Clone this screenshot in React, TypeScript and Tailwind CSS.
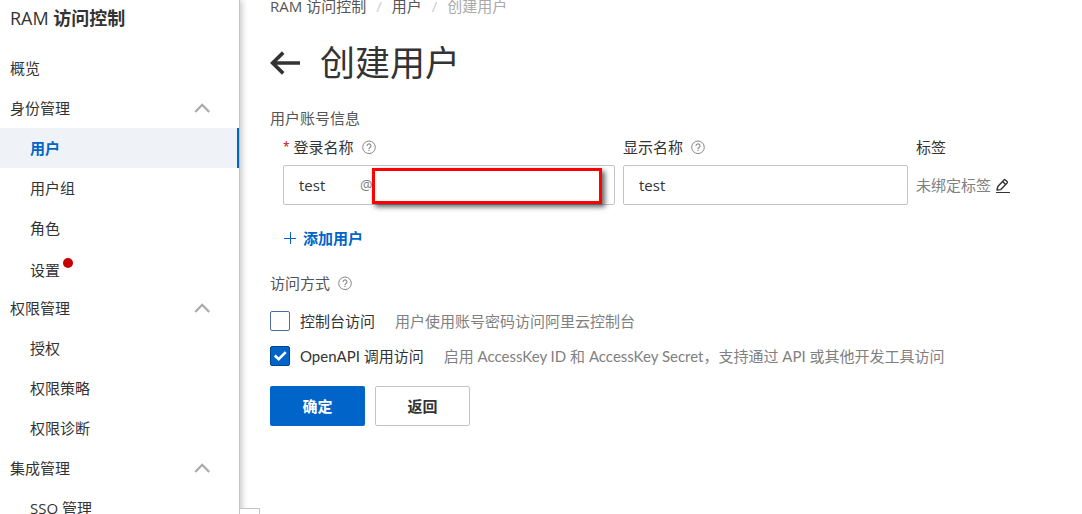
import { useState } from 'react';

interface NavItem {
  label: string;
  active?: boolean;
  dot?: boolean;
}

interface NavGroup {
  title: string;
  items: NavItem[];
}

const groups: NavGroup[] = [
  {
    title: '身份管理',
    items: [
      { label: '用户', active: true },
      { label: '用户组' },
      { label: '角色' },
      { label: '设置', dot: true },
    ],
  },
  {
    title: '权限管理',
    items: [{ label: '授权' }, { label: '权限策略' }, { label: '权限诊断' }],
  },
  {
    title: '集成管理',
    items: [{ label: 'SSO 管理' }],
  },
];

function ChevronUp() {
  return (
    <svg className="h-4 w-4 text-[#aaaaaa]" viewBox="0 0 16 16" fill="none" stroke="currentColor" strokeWidth="2.2">
      <path d="M1.2 12 8.2 4.8 15.2 12" />
    </svg>
  );
}

function HelpIcon() {
  return (
    <svg className="h-[14px] w-[14px] text-[#888888]" viewBox="0 0 14 14" fill="none" stroke="currentColor">
      <circle cx="7" cy="7.3" r="6.3" />
      <path d="M5 6a2 2 0 1 1 3 1.6c-.7.4-1 .7-1 1.3" strokeWidth="1.1" />
      <path d="M7 9.8v1.2" strokeWidth="1.2" />
    </svg>
  );
}

function PencilIcon() {
  return (
    <svg className="h-4 w-4 text-[#333333]" viewBox="0 0 16 16" fill="none" stroke="currentColor" strokeWidth="1.4">
      <path d="M2 13 2.8 9.6 9 2.9Q9.7 2.2 10.4 2.9L12.1 4.5Q12.7 5.2 12.1 5.9L5.8 12.6 2 13Z" strokeLinejoin="round" />
      <path d="M7.6 4.6 10.6 7.5" />
      <path d="M1 15.5h14" strokeWidth="1" />
    </svg>
  );
}

function Sidebar() {
  return (
    <aside className="relative z-10 w-60 shrink-0 border-r border-[#c0c4cc] bg-white shadow-[2px_0_6px_rgba(0,0,0,0.22)]">
      <h2 className="h-12 pt-2 pl-[10px] text-lg leading-5 font-semibold">
        <span className="font-normal">RAM</span> 访问控制
      </h2>
      <nav>
        <a href="#overview" className="flex h-10 items-center pl-[10px]">
          概览
        </a>
        {groups.map((group) => (
          <div key={group.title}>
            <button type="button" className="flex h-10 w-full items-center justify-between pr-[29px] pl-[10px]">
              {group.title}
              <ChevronUp />
            </button>
            {group.items.map((item) => (
              <a
                key={item.label}
                href="#"
                className={`flex h-10 items-center pl-[30px] ${
                  item.active ? 'border-r-2 border-[#0064c8] bg-[#eff3f8] font-semibold text-[#0064c8]' : ''
                }`}
              >
                {item.dot ? (
                  <span className="flex gap-[3px]">
                    <span className="pt-1">{item.label}</span>
                    <span className="mt-0.5 h-[10px] w-[10px] rounded-full bg-[#c80000]" />
                  </span>
                ) : (
                  item.label
                )}
              </a>
            ))}
          </div>
        ))}
      </nav>
      <button
        type="button"
        aria-label="收起"
        className="absolute top-[508px] left-full h-10 w-[21px] border border-[#c0c4cc] bg-white"
      />
    </aside>
  );
}

export default function App() {
  const [loginName, setLoginName] = useState('test');
  const [displayName, setDisplayName] = useState('test');
  const [consoleAccess, setConsoleAccess] = useState(false);
  const [apiAccess, setApiAccess] = useState(true);

  const checkboxClass =
    'h-5 w-5 shrink-0 appearance-none rounded-[2px] border border-[#4b6f9c] bg-white checked:border-[#00468c] checked:bg-[#0064c8]';

  return (
    <div className="flex h-screen overflow-hidden bg-white font-['Open_Sans','Noto_Sans_CJK_SC',sans-serif] text-[15px] leading-5 text-[#333333]">
      <Sidebar />
      <main className="min-w-0 flex-1 px-[30px]">
        <nav className="flex gap-[10px] leading-3 text-[#555555]">
          <a href="#ram">RAM 访问控制</a>
          <span className="text-[#cccccc]">/</span>
          <a href="#users">用户</a>
          <span className="text-[#cccccc]">/</span>
          <span className="text-[#aaaaaa]">创建用户</span>
        </nav>

        <div className="mt-[26px] flex items-center gap-5">
          <button type="button" aria-label="返回用户列表">
            <svg className="h-[30px] w-[30px]" viewBox="0 0 30 30" fill="none" stroke="currentColor" strokeWidth="3.6">
              <path d="M3 15h27M13.2 4.6 2.6 15l10.6 10.4" />
            </svg>
          </button>
          <h1 className="text-[35px] leading-[50px]">创建用户</h1>
        </div>

        <form onSubmit={(e) => e.preventDefault()}>
          <h3 className="mt-5 text-[#555555]">用户账号信息</h3>
          <div className="mt-[9px] grid grid-cols-[332fr_285fr_136fr] gap-2 pl-[13px]">
            <div>
              <div className="mb-2 flex items-center gap-2">
                <label htmlFor="loginName" className="flex gap-1">
                  <span className="text-xs leading-5 text-[#c80000]">*</span>
                  登录名称
                </label>
                <HelpIcon />
              </div>
              <div className="relative flex h-10 items-center rounded-[2px] border border-[#c0c4cc]">
                <input
                  id="loginName"
                  value={loginName}
                  onChange={(e) => setLoginName(e.target.value)}
                  className="h-full w-[76px] pl-[15px] outline-none"
                />
                <span className="text-sm text-[#808080]">@</span>
                <div className="absolute top-[2px] right-[12px] left-[88px] h-9 border-[3px] border-[#ff0000] bg-white shadow-[3px_3px_5px_rgba(0,0,0,0.6)]" />
              </div>
            </div>

            <div>
              <div className="mb-2 flex items-center gap-2">
                <label htmlFor="displayName">显示名称</label>
                <HelpIcon />
              </div>
              <input
                id="displayName"
                value={displayName}
                onChange={(e) => setDisplayName(e.target.value)}
                className="h-10 w-full rounded-[2px] border border-[#c0c4cc] px-[15px] outline-none"
              />
            </div>

            <div>
              <div className="mb-2">标签</div>
              <div className="flex h-10 items-center gap-1 whitespace-nowrap text-[#808080]">
                未绑定标签
                <button type="button" aria-label="编辑标签">
                  <PencilIcon />
                </button>
              </div>
            </div>
          </div>

          <button type="button" className="mt-[23px] ml-[14px] flex items-center gap-[7px] font-semibold text-[#0064c8]">
            <svg className="h-3 w-3" viewBox="0 0 12 12" fill="none" stroke="currentColor">
              <path d="M6.5 0v12M0 6.5h12" />
            </svg>
            添加用户
          </button>

          <div className="mt-[25px] flex items-center gap-2 text-[#555555]">
            访问方式
            <HelpIcon />
          </div>

          <div className="mt-[18px] flex items-center">
            <input
              id="consoleAccess"
              type="checkbox"
              checked={consoleAccess}
              onChange={(e) => setConsoleAccess(e.target.checked)}
              className={checkboxClass}
            />
            <label htmlFor="consoleAccess" className="pl-[10px]">
              控制台访问
            </label>
            <span className="pl-5 text-[#808080]">用户使用账号密码访问阿里云控制台</span>
          </div>

          <div className="mt-[15px] flex items-center font-[Lato,'Noto_Sans_CJK_SC',sans-serif]">
            <span className="relative flex">
              <input
                id="apiAccess"
                type="checkbox"
                checked={apiAccess}
                onChange={(e) => setApiAccess(e.target.checked)}
                className={checkboxClass}
              />
              {apiAccess && (
                <svg
                  className="pointer-events-none absolute inset-0 h-5 w-5 text-white"
                  viewBox="0 0 20 20"
                  fill="none"
                  stroke="currentColor"
                  strokeWidth="2.6"
                >
                  <path d="m4.8 9.5 3.9 3.7 7-7" />
                </svg>
              )}
            </span>
            <label htmlFor="apiAccess" className="pl-[10px]">
              OpenAPI 调用访问
            </label>
            <span className="pl-5 text-[#808080]">
              启用 AccessKey ID 和 AccessKey Secret，支持通过 API 或其他开发工具访问
            </span>
          </div>

          <div className="mt-5 flex gap-[10px]">
            <button type="submit" className="h-10 w-[95px] rounded-[2px] bg-[#0064c8] font-semibold text-white">
              确定
            </button>
            <button type="button" className="h-10 w-[95px] rounded-[2px] border border-[#c0c4cc] bg-white font-semibold">
              返回
            </button>
          </div>
        </form>
      </main>
    </div>
  );
}
